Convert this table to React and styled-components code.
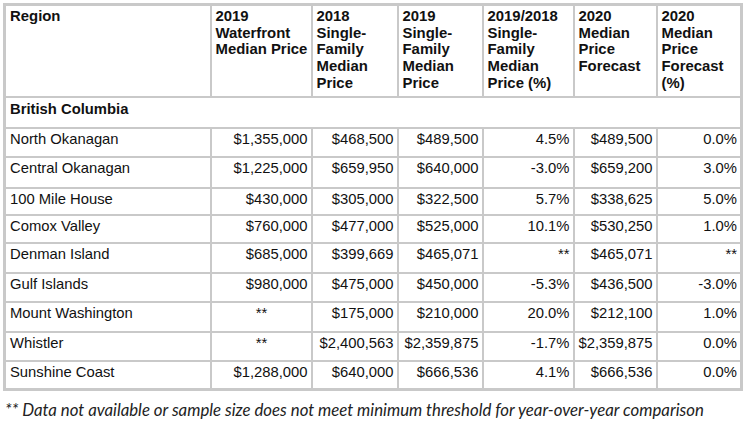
import React from "react";
import styled, { createGlobalStyle } from "styled-components";

const Global = createGlobalStyle`
  html, body { margin: 0; padding: 0; background: #fff; }
  body { font-family: "Liberation Sans", Arial, sans-serif; color: #111; }
`;

const Page = styled.div`
  width: 750px;
  height: 426px;
  padding: 3px 0 0 3px;
  box-sizing: border-box;
  overflow: hidden;
`;

const Table = styled.table`
  border-collapse: collapse;
  table-layout: fixed;
  width: 737px;
  border: 3px solid #c9c9c9;
  font-size: 14.8px;
`;

const HeadCell = styled.th`
  border: 2px solid #c9c9c9;
  font-weight: bold;
  text-align: left;
  vertical-align: top;
  line-height: 16.7px;
  padding: 2px 2px 4px 4px;
  font-size: 14.9px;
  height: 84px;
`;

const SectionCell = styled.td`
  border: 2px solid #c9c9c9;
  font-weight: bold;
  vertical-align: top;
  line-height: 16px;
  padding: 3px 4px 10px 4px;
  height: 16px;
`;

const Cell = styled.td`
  border: 2px solid #c9c9c9;
  vertical-align: top;
  line-height: 16px;
  padding: 2px 3px 0 4px;
  height: ${(p) => p.$h}px;
  text-align: ${(p) => p.$align};
  white-space: nowrap;
  overflow: hidden;
`;

const Note = styled.div`
  font-family: Lato, "Open Sans", sans-serif;
  font-style: italic;
  font-size: 16.8px;
  line-height: 20px;
  color: #222;
  margin: 9px 0 0 2px;
  white-space: nowrap;
`;

const widths = [206, 101, 86, 85, 91, 83, 85];

const headers = [
  ["Region"],
  ["2019", "Waterfront", "Median Price"],
  ["2018", "Single-", "Family", "Median", "Price"],
  ["2019", "Single-", "Family", "Median", "Price"],
  ["2019/2018", "Single-", "Family", "Median", "Price (%)"],
  ["2020", "Median", "Price", "Forecast"],
  ["2020", "Median", "Price", "Forecast", "(%)"],
];

const rows = [
  ["North Okanagan", "$1,355,000", "$468,500", "$489,500", "4.5%", "$489,500", "0.0%", 25],
  ["Central Okanagan", "$1,225,000", "$659,950", "$640,000", "-3.0%", "$659,200", "3.0%", 27],
  ["100 Mile House", "$430,000", "$305,000", "$322,500", "5.7%", "$338,625", "5.0%", 23],
  ["Comox Valley", "$760,000", "$477,000", "$525,000", "10.1%", "$530,250", "1.0%", 24],
  ["Denman Island", "$685,000", "$399,669", "$465,071", "**", "$465,071", "**", 26],
  ["Gulf Islands", "$980,000", "$475,000", "$450,000", "-5.3%", "$436,500", "-3.0%", 25],
  ["Mount Washington", "**", "$175,000", "$210,000", "20.0%", "$212,100", "1.0%", 26],
  ["Whistler", "**", "$2,400,563", "$2,359,875", "-1.7%", "$2,359,875", "0.0%", 25],
  ["Sunshine Coast", "$1,288,000", "$640,000", "$666,536", "4.1%", "$666,536", "0.0%", 24],
];

function align(v, i) {
  if (i === 0) return "left";
  if (i === 1 && v === "**") return "center";
  return "right";
}

export default function App() {
  return (
    <Page>
      <Global />
      <Table>
        <colgroup>
          {widths.map((w, i) => (
            <col key={i} style={{ width: w }} />
          ))}
        </colgroup>
        <thead>
          <tr>
            {headers.map((h, i) => (
              <HeadCell key={i}>
                {h.map((l, j) => (
                  <React.Fragment key={j}>
                    {l}
                    {j < h.length - 1 && <br />}
                  </React.Fragment>
                ))}
              </HeadCell>
            ))}
          </tr>
        </thead>
        <tbody>
          <tr>
            <SectionCell colSpan={7}>British Columbia</SectionCell>
          </tr>
          {rows.map((r) => (
            <tr key={r[0]}>
              {r.slice(0, 7).map((v, i) => (
                <Cell key={i} $align={align(v, i)} $h={r[7]}>
                  {v}
                </Cell>
              ))}
            </tr>
          ))}
        </tbody>
      </Table>
      <Note>
        ** Data not available or sample size does not meet minimum threshold for year-over-year comparison
      </Note>
    </Page>
  );
}
